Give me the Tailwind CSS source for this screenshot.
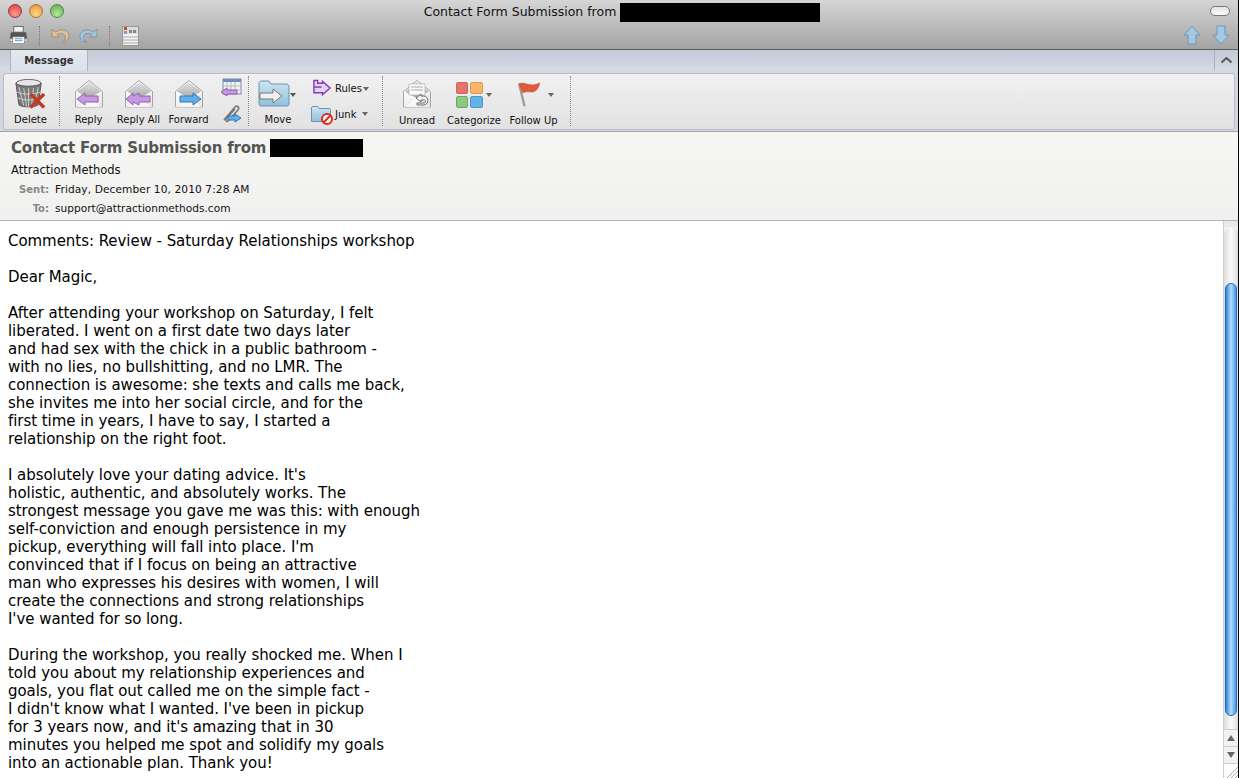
<!DOCTYPE html>
<html lang="en">
<head>
<meta charset="UTF-8" />
<title>Contact Form Submission</title>
<script src="https://cdn.jsdelivr.net/npm/@tailwindcss/browser@4"></script>
</head>
<body class="bg-white">
<div class="w-[1239px] h-[778px] overflow-hidden flex flex-col font-['DejaVu_Sans',sans-serif] text-black border-r border-black">

  <!-- shared icon parts -->
  <svg width="0" height="0" class="absolute">
    <defs>
      <linearGradient id="flapG" x1="0" y1="0" x2="0" y2="1"><stop offset="0" stop-color="#e4e4e4"/><stop offset="1" stop-color="#a6a6a6"/></linearGradient>
      <linearGradient id="bodyG" x1="0" y1="0" x2="1" y2="1"><stop offset="0" stop-color="#ffffff"/><stop offset="1" stop-color="#e6e6e6"/></linearGradient>
      <linearGradient id="folderG" x1="0" y1="0" x2="0" y2="1"><stop offset="0" stop-color="#cfe5f3"/><stop offset="1" stop-color="#8fc0dd"/></linearGradient>
      <symbol id="env" viewBox="0 0 30 30">
        <path d="M1.500 12.500 15 1.500l13.500 11V28h-27z" fill="url(#bodyG)" stroke="#a5a5a5"/>
        <path d="M3 12.500 15 3l12 9.500-12 7z" fill="url(#flapG)"/>
        <path d="M2 28 13 19h4l11 9z" fill="#f8f8f8" stroke="#d4d4d4" stroke-width=".5"/>
        <path d="M2 13 15 21l13-8" fill="none" stroke="#fff"/>
      </symbol>
    </defs>
  </svg>

  <!-- title bar + toolbar -->
  <div class="h-[50px] shrink-0 bg-gradient-to-b from-[#d6d6d6] to-[#a3a3a3] border-b border-[#5e5e5e] flex flex-col">
    <div class="h-[22px] relative flex items-center justify-center pt-[2px]">
      <div class="absolute left-[8px] top-[4px] flex gap-[7px]">
        <span class="w-[14px] h-[14px] rounded-full border border-[#8f3a3a] bg-[radial-gradient(circle_at_50%_75%,#ff9c94,#dd3a36)]"></span>
        <span class="w-[14px] h-[14px] rounded-full border border-[#a8763a] bg-[radial-gradient(circle_at_50%_75%,#ffd789,#e78a2a)]"></span>
        <span class="w-[14px] h-[14px] rounded-full border border-[#4f8a45] bg-[radial-gradient(circle_at_50%_75%,#b7e79b,#5aa94a)]"></span>
      </div>
      <div class="flex items-center gap-[4px] text-[12.5px] text-[#111] ml-[6px]">
        <span>Contact Form Submission from</span>
        <span class="w-[200px] h-[19px] bg-black"></span>
      </div>
      <span class="absolute left-[1210px] top-[6px] w-[20px] h-[10px] rounded-full border border-[#777] bg-gradient-to-b from-[#e4e4e4] to-[#fafafa]"></span>
    </div>
    <div class="flex-1 relative flex items-center pl-[9px]">
      <svg width="19" height="20" viewBox="0 0 20 20" class="mt-[-1px]"><rect x="5" y="1" width="10" height="6" fill="#f2f2f2" stroke="#666"/><path d="M2 7h16l1 7H1z" fill="#555"/><rect x="1" y="14" width="18" height="3" fill="#d9d9d9" stroke="#777" stroke-width=".5"/><rect x="4" y="12" width="12" height="7" fill="#fff" stroke="#777" stroke-width=".6"/><path d="M6 14h8M6 16h8" stroke="#5b93c4"/></svg>
      <span class="w-[1px] h-[20px] ml-[11px] border-l border-dotted border-[#777]"></span>
      <svg width="21" height="18" viewBox="0 0 22 18" class="ml-[10px]"><path d="M2 2v8h8L7.500 7.500C10 5.500 15 6 16 9c.7 2.500-.5 5-3 6.500 4-.2 7-3 7-7C20 3.500 12 0 6 5z" fill="#d9c4a2" stroke="#a08a66"/></svg>
      <svg width="21" height="18" viewBox="0 0 22 18" class="ml-[7px]"><path d="M20 2v8h-8l2.500-2.500C12 5.500 7 6 6 9c-.7 2.500.5 5 3 6.500-4-.2-7-3-7-7C2 3.500 10 0 16 5z" fill="#a8c6d8" stroke="#6d94ac"/></svg>
      <span class="w-[1px] h-[20px] ml-[10px] border-l border-dotted border-[#777]"></span>
      <svg width="17" height="20" viewBox="0 0 17 20" class="ml-[12px]"><rect x=".5" y=".5" width="16" height="19" fill="#f2f2f2" stroke="#999"/><rect x="1" y="1" width="15" height="7" fill="#dcdcdc"/><rect x="2" y="1" width="3" height="3" fill="#d8482e"/><rect x="2" y="5" width="3" height="3" fill="#7aa7d0"/><rect x="7" y="4" width="3" height="3" fill="#888"/><rect x="11" y="4" width="3" height="3" fill="#888"/><path d="M1 11h15M1 14h15M1 17h15" stroke="#aaa"/></svg>
      <svg width="18" height="20" viewBox="0 0 18 20" class="absolute left-[1183px] top-[3px]"><path d="M9 1l8 9h-4v9H5v-9H1z" fill="#a2c8e4" stroke="#6f97b6"/></svg>
      <svg width="18" height="20" viewBox="0 0 18 20" class="absolute left-[1212px] top-[3px]"><path d="M9 19l8-9h-4V1H5v9H1z" fill="#a2c8e4" stroke="#6f97b6"/></svg>
    </div>
  </div>

  <!-- tab bar -->
  <div class="h-[21px] shrink-0 bg-gradient-to-b from-[#c3c9d6] to-[#d6dbe5] flex relative">
    <div class="ml-[10px] w-[78px] h-[21px] bg-gradient-to-b from-[#e2e6ef] to-[#dde1ea] border-x border-[#aeb4c2] text-[10px] font-semibold text-[#333] flex items-center justify-center">Message</div>
    <div class="absolute left-[1214px] top-0 h-[20px] w-[24px] border-l border-[#a9afbc] flex items-center justify-center">
      <svg width="13" height="8" viewBox="0 0 13 8"><path d="M1.500 6.500 6.500 2l5 4.500" fill="none" stroke="#555" stroke-width="2"/></svg>
    </div>
  </div>

  <!-- ribbon -->
  <div class="h-[61px] shrink-0 bg-[#d2d7e1] px-[3px] pt-[2px] border-b border-[#9ea3ad]">
    <div class="h-[57px] w-[1232px] rounded-[3px] border border-[#b9bdc6] bg-gradient-to-b from-[#f1f1f1] to-[#e2e2e2] flex text-[10px] text-[#111]">

      <div class="w-[55px] flex flex-col items-center pt-[3px] pr-[2px] shrink-0">
        <svg width="33" height="33" viewBox="0 0 34 33">
          <ellipse cx="15" cy="6" rx="13" ry="4" fill="#e6e6e6" stroke="#666"/>
          <path d="M2 6l3 22c2 3 18 3 20 0l3-22c-3 4-23 4-26 0z" fill="#7a7a7a" stroke="#555"/>
          <path d="M5 10l5 19M10 11l3 19M15 11v19M20 11l-2 19M25 10l-4 19M3 15c7 3 17 3 24 0M4 21c7 3 15 3 22 0" stroke="#cfcfcf" fill="none"/>
          <path d="M17 17l14 14M31 17 17 31" stroke="#c23a22" stroke-width="3.500"/>
        </svg>
        <span class="mt-[2px]">Delete</span>
      </div>
      <span class="w-[1px] h-[50px] mt-[2px] border-l border-dotted border-[#888] shrink-0"></span>

      <div class="w-[57px] flex flex-col items-center pt-[5px] shrink-0">
        <svg width="30" height="30" viewBox="0 0 30 30"><use href="#env"/><path d="M3 20l8-6v3h13v6H11v3z" fill="#c79ae0" stroke="#8e5fb0"/></svg>
        <span class="mt-[3px]">Reply</span>
      </div>
      <div class="w-[43px] flex flex-col items-center pt-[5px] shrink-0">
        <svg width="30" height="30" viewBox="0 0 30 30"><use href="#env"/><path d="M2 20l7-6v3l6-3v3h11v6H15v3l-6-3v3z" fill="#c79ae0" stroke="#8e5fb0"/></svg>
        <span class="mt-[3px] whitespace-nowrap">Reply All</span>
      </div>
      <div class="w-[57px] flex flex-col items-center pt-[5px] shrink-0">
        <svg width="30" height="30" viewBox="0 0 30 30"><use href="#env"/><path d="M27 20l-8-6v3H6v6h13v3z" fill="#62aee8" stroke="#2f78b5"/></svg>
        <span class="mt-[3px]">Forward</span>
      </div>
      <div class="w-[31px] flex flex-col items-center pr-[3px] pt-[3px] gap-[4px] shrink-0">
        <svg width="22" height="22" viewBox="0 0 22 22"><rect x="3" y="2" width="18" height="15" fill="#f2f2f2" stroke="#7d8aa0"/><rect x="3" y="2" width="18" height="3" fill="#6e8db8"/><path d="M7 5v12M11 5v12M15 5v12M3 9h18M3 13h18" stroke="#b5bcc8"/><path d="M1 15l6-4v2h10v4H7v2z" fill="#c79ae0" stroke="#8e5fb0"/></svg>
        <svg width="22" height="22" viewBox="0 0 22 22"><path d="M4 17 15 4c2-2 5 0 3 3L8 18c-1 1-3 0-2-2l9-10" fill="none" stroke="#777" stroke-width="1.600"/><path d="M21 15l-6-4v2H8v4h7v2z" fill="#62aee8" stroke="#2f78b5"/></svg>
      </div>
      <span class="w-[1px] h-[50px] mt-[2px] border-l border-dotted border-[#888] shrink-0"></span>

      <div class="w-[58px] flex flex-col items-center pt-[6px] shrink-0 relative">
        <svg width="32" height="27" viewBox="0 0 32 27" class="mr-[8px]"><path d="M1 4c0-2 1-3 3-3h7l2 3h15c2 0 3 1 3 3v17c0 1-1 2-2 2H3c-1 0-2-1-2-2z" fill="url(#folderG)" stroke="#6a93ad"/><path d="M2 13h13V9l9 7-9 7v-4H2z" fill="#f2f2f2" stroke="#777"/></svg>
        <span class="absolute left-[41px] top-[19px] w-0 h-0 border-x-[3px] border-x-transparent border-t-[4px] border-t-[#555]"></span>
        <span class="mt-[5px]">Move</span>
      </div>
      <div class="w-[75px] flex flex-col pl-[4px] pt-[4px] gap-[6px] shrink-0">
        <div class="flex items-center h-[21px]">
          <svg width="20" height="20" viewBox="0 0 21 20" class="ml-[1px]"><path d="M2 1h4v3h5v-2l8 7-8 7v-2H2z" fill="#e3d1f2" stroke="#8338b8" stroke-width="1.500"/><path d="M2 8h8" stroke="#8338b8" stroke-width="1.500"/></svg>
          <span class="ml-[3px]">Rules</span>
          <span class="ml-[1px] w-0 h-0 border-x-[3px] border-x-transparent border-t-[4px] border-t-[#666]"></span>
        </div>
        <div class="flex items-center h-[21px]">
          <div class="relative w-[21px] h-[19px]">
            <svg width="20" height="17" viewBox="0 0 20 17"><path d="M.5 2c0-1 .5-1.500 1.500-1.500h5l1 2h10c1 0 1.500.5 1.500 1.500v11.500H.5z" fill="url(#folderG)" stroke="#6a93ad"/></svg>
            <svg width="12" height="12" viewBox="0 0 12 12" class="absolute left-[10px] top-[7px]"><circle cx="6" cy="6" r="5" fill="#fff" stroke="#d92b1f" stroke-width="2"/><path d="M2.500 9.500l7-7" stroke="#d92b1f" stroke-width="2"/></svg>
          </div>
          <span class="ml-[3px] mt-[-3px]">Junk</span>
          <span class="ml-[6px] mt-[-3px] w-0 h-0 border-x-[3px] border-x-transparent border-t-[4px] border-t-[#666]"></span>
        </div>
      </div>
      <span class="w-[1px] h-[50px] mt-[2px] border-l border-dotted border-[#888] shrink-0"></span>

      <div class="w-[68px] flex flex-col items-center pt-[5px] shrink-0">
        <svg width="30" height="30" viewBox="0 0 30 30"><use href="#env"/><rect x="7" y="5" width="16" height="11" fill="#fafafa" stroke="#aaa" stroke-width=".6"/><path d="M9 8h12M9 11h12" stroke="#aaa"/><path d="M15 26h7c5 0 5-9 0-9h-3v-2l-5 4 5 4v-2h3c2 0 2 3 0 3h-7z" fill="#f4f4f4" stroke="#666"/></svg>
        <span class="mt-[4px]">Unread</span>
      </div>
      <div class="w-[46px] flex flex-col items-center pt-[8px] shrink-0 relative">
        <div class="grid grid-cols-2 gap-[2px] w-[27px] mr-[10px] shrink-0">
          <span class="h-[12px] rounded-[2px] border border-[#c26a60] bg-[#e8736a]"></span>
          <span class="h-[12px] rounded-[2px] border border-[#d69a58] bg-[#fbb566]"></span>
          <span class="h-[12px] rounded-[2px] border border-[#70a565] bg-[#8cc97e]"></span>
          <span class="h-[12px] rounded-[2px] border border-[#4f97c8] bg-[#61b3e6]"></span>
        </div>
        <span class="absolute left-[35px] top-[19px] w-0 h-0 border-x-[3px] border-x-transparent border-t-[4px] border-t-[#666]"></span>
        <span class="mt-[5px] whitespace-nowrap">Categorize</span>
      </div>
      <div class="w-[73px] flex flex-col items-center pt-[7px] shrink-0 relative">
        <svg width="30" height="27" viewBox="0 0 30 30" class="mr-[9px]"><path d="M4 3l6 25" stroke="#9a9a9a" stroke-width="2.500"/><path d="M4 3c5-2 8 1 12 1 4 1 7 0 11-2-1 5-3 9-7 10-4 1-7-1-12 1z" fill="#dd5a3c" stroke="#c04526" stroke-width=".5"/></svg>
        <span class="absolute left-[51px] top-[19px] w-0 h-0 border-x-[3px] border-x-transparent border-t-[4px] border-t-[#666]"></span>
        <span class="mt-[5px] whitespace-nowrap">Follow Up</span>
      </div>
      <span class="w-[1px] h-[50px] mt-[2px] border-l border-dotted border-[#888] shrink-0"></span>
    </div>
  </div>

  <!-- message header -->
  <div class="h-[89px] shrink-0 bg-gradient-to-b from-[#f6f6f2] to-[#f0f0f0] border-b border-[#b5b5b5] pl-[11px] pt-[5px]">
    <div class="flex items-center h-[22px] text-[15px] font-bold tracking-[-0.2px] text-[#555] gap-[4px]">
      <span>Contact Form Submission from</span>
      <span class="w-[93px] h-[18px] bg-black"></span>
    </div>
    <p class="text-[11.5px] leading-[14px] mt-[4px] text-[#111]">Attraction Methods</p>
    <div class="grid grid-cols-[38px_1fr] gap-x-[6px] text-[10.6px] leading-[19px] mt-[3px]">
      <span class="text-right font-bold text-[#888] text-[10px]">Sent:</span><span class="text-[#111] tracking-[0.1px]">Friday, December 10, 2010 7:28 AM</span>
      <span class="text-right font-bold text-[#888] text-[10px]">To:</span><span class="text-[#111]">support@attractionmethods.com</span>
    </div>
  </div>

  <!-- body + scrollbar -->
  <div class="flex-1 flex min-h-0">
    <div class="flex-1 pl-[8px] pt-[11px] text-[15px] tracking-[-0.05px] leading-[18px] whitespace-nowrap overflow-hidden">
      <p>Comments: Review - Saturday Relationships workshop</p>
      <p class="mt-[18px]">Dear Magic,</p>
      <p class="mt-[18px]">After attending your workshop on Saturday, I felt<br>liberated. I went on a first date two days later<br>and had sex with the chick in a public bathroom -<br>with no lies, no bullshitting, and no LMR. The<br>connection is awesome: she texts and calls me back,<br>she invites me into her social circle, and for the<br>first time in years, I have to say, I started a<br>relationship on the right foot.</p>
      <p class="mt-[18px]">I absolutely love your dating advice. It's<br>holistic, authentic, and absolutely works. The<br>strongest message you gave me was this: with enough<br>self-conviction and enough persistence in my<br>pickup, everything will fall into place. I'm<br>convinced that if I focus on being an attractive<br>man who expresses his desires with women, I will<br>create the connections and strong relationships<br>I've wanted for so long.</p>
      <p class="mt-[18px]">During the workshop, you really shocked me. When I<br>told you about my relationship experiences and<br>goals, you flat out called me on the simple fact -<br>I didn't know what I wanted. I've been in pickup<br>for 3 years now, and it's amazing that in 30<br>minutes you helped me spot and solidify my goals<br>into an actionable plan. Thank you!</p>
    </div>
    <div class="w-[15px] shrink-0 border-l border-[#cfcfcf] bg-[#f2f2f2] flex flex-col">
      <div class="h-[6px] bg-[#e9e9e9]"></div>
      <div class="flex-1 min-h-0 pt-[56px] rounded-t-full bg-gradient-to-r from-[#dcdcdc] via-[#fafafa] to-[#dcdcdc]">
        <div class="h-[433px] mx-[1px] rounded-full border border-[#1c6fc9] bg-gradient-to-r from-[#2a82dc] via-[#b5dbf7] to-[#3f97e6]"></div>
      </div>
      <div class="h-[17px] border-t border-[#cfcfcf] flex items-center justify-center"><span class="w-0 h-0 border-x-[4px] border-x-transparent border-b-[6px] border-b-[#666]"></span></div>
      <div class="h-[17px] border-t border-[#cfcfcf] flex items-center justify-center"><span class="w-0 h-0 border-x-[4px] border-x-transparent border-t-[6px] border-t-[#666]"></span></div>
      <div class="h-[15px] border-t border-[#cfcfcf] bg-white flex items-end justify-end">
        <svg width="13" height="13" viewBox="0 0 13 13"><path d="M2 13 13 2M6 13l7-7M10 13l3-3" stroke="#aaa"/></svg>
      </div>
    </div>
  </div>
</div>
</body>
</html>
